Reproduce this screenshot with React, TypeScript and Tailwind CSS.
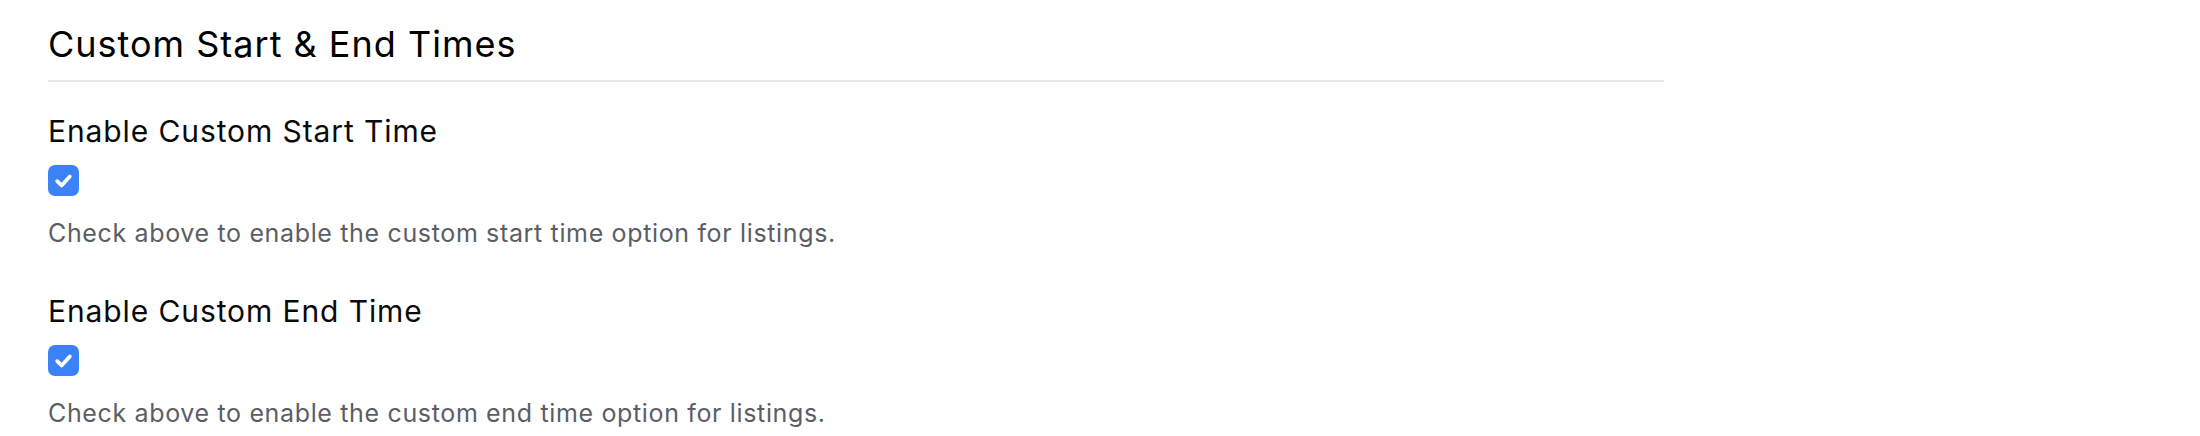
import React from 'react';

const CheckBox: React.FC<{ checked: boolean }> = ({ checked }) => (
  <span
    className={`flex items-center justify-center w-[31px] h-[31px] rounded-[7px] ${checked ? 'bg-[#3b82f6]' : 'bg-white border-2 border-gray-300'}`}
  >
    {checked && (
      <svg width="31" height="31" viewBox="0 0 31 31" fill="none">
        <path d="M9.2 16.2l4.4 4.3 8.2-9" stroke="white" strokeWidth="3.8" strokeLinecap="round" strokeLinejoin="round" />
      </svg>
    )}
  </span>
);

const ToggleField: React.FC<{ label: string; help: string; gapTop: string }> = ({ label, help, gapTop }) => (
  <div className={gapTop}>
    <div className="text-[30px] leading-[36px] tracking-[0.9px] text-[#0a0a0a]">{label}</div>
    <div className="mt-[16px]">
      <CheckBox checked />
    </div>
    <p className="mt-[21px] text-[25px] leading-[32px] tracking-[0.65px] text-[#5b5e64]">{help}</p>
  </div>
);

export default function App() {
  return (
    <div className="min-h-[436px] bg-white px-[48px] pt-[22px]" style={{ fontFamily: 'Inter, "Liberation Sans", sans-serif' }}>
      <div className="w-[1616px]">
        <h2 className="text-[36px] leading-[44px] tracking-[1px] text-black pb-[14px] border-b-2 border-[#e5e6ea]">
          Custom Start &amp; End Times
        </h2>
        <ToggleField
          gapTop="mt-[31px]"
          label="Enable Custom Start Time"
          help="Check above to enable the custom start time option for listings."
        />
        <ToggleField
          gapTop="mt-[44px]"
          label="Enable Custom End Time"
          help="Check above to enable the custom end time option for listings."
        />
      </div>
    </div>
  );
}
